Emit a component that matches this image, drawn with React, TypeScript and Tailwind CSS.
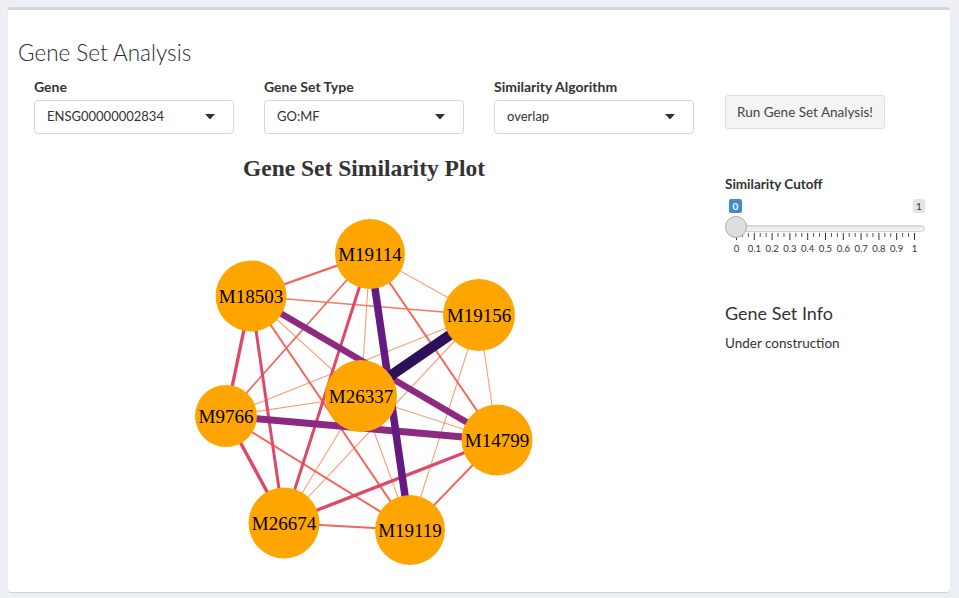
import React from "react";

type GeneNode = { id: string; x: number; y: number; r: number };

// node positions are in page pixels; the svg's viewBox starts where the svg sits
const nodes: GeneNode[] = [
  { id: "M19114", x: 370, y: 254, r: 35 },
  { id: "M18503", x: 251, y: 296, r: 35.5 },
  { id: "M19156", x: 479, y: 315, r: 36 },
  { id: "M26337", x: 361, y: 396, r: 36 },
  { id: "M9766", x: 226, y: 416, r: 31 },
  { id: "M14799", x: 497, y: 440, r: 35.5 },
  { id: "M26674", x: 284, y: 523, r: 35.5 },
  { id: "M19119", x: 410, y: 530, r: 35 },
];

const LIGHT = { c: "#fb9f75", w: 1.1 };
const SALMON = { c: "#f1665e", w: 2 };
const RED = { c: "#de4968", w: 3.4 };

const edges: [string, string, string, number][] = [
  ["M19114", "M19156", LIGHT.c, LIGHT.w],
  ["M19114", "M26337", LIGHT.c, LIGHT.w],
  ["M18503", "M26337", LIGHT.c, LIGHT.w],
  ["M19156", "M9766", LIGHT.c, LIGHT.w],
  ["M19156", "M14799", LIGHT.c, LIGHT.w],
  ["M19156", "M26674", LIGHT.c, LIGHT.w],
  ["M19156", "M19119", LIGHT.c, LIGHT.w],
  ["M26337", "M9766", LIGHT.c, LIGHT.w],
  ["M26337", "M14799", LIGHT.c, LIGHT.w],
  ["M26337", "M26674", LIGHT.c, LIGHT.w],
  ["M26337", "M19119", LIGHT.c, LIGHT.w],
  ["M19114", "M18503", SALMON.c, 2.3],
  ["M19114", "M14799", SALMON.c, SALMON.w],
  ["M19114", "M9766", SALMON.c, 1.6],
  ["M18503", "M19156", "#f4795f", 1.5],
  ["M18503", "M19119", SALMON.c, SALMON.w],
  ["M9766", "M19119", SALMON.c, SALMON.w],
  ["M14799", "M19119", SALMON.c, SALMON.w],
  ["M26674", "M19119", SALMON.c, 1.8],
  ["M18503", "M9766", RED.c, RED.w],
  ["M18503", "M26674", RED.c, 3],
  ["M19114", "M26674", RED.c, 3],
  ["M9766", "M26674", RED.c, RED.w],
  ["M14799", "M26674", RED.c, RED.w],
  ["M18503", "M14799", "#8c2981", 6.5],
  ["M9766", "M14799", "#8c2981", 7],
  ["M19114", "M19119", "#641a80", 7.5],
  ["M19156", "M26337", "#2c105c", 10.5],
];

const byId = (id: string) => nodes.find((n) => n.id === id)!;

const SelectBox = ({ label, value }: { label: string; value: string }) => (
  <div className="w-[230px] px-[15px]">
    <div className="h-[20px] text-[14px] font-bold leading-[20px] text-[#333]">{label}</div>
    <div className="mt-[3px] flex h-[34px] w-[200px] items-center justify-between rounded-[4px] border border-[#d2d6de] bg-white pl-[12px] pr-[18px] text-[13px] text-[#333]">
      <span>{value}</span>
      <svg width="10" height="6" viewBox="0 0 10 6">
        <path d="M0 0 L10 0 L5 5.5 Z" fill="#333" />
      </svg>
    </div>
  </div>
);

// 10 big steps, 2 small ticks in each
const ticks = Array.from({ length: 31 }, (_, i) => i);

const CutoffSlider = () => (
  <div className="relative mt-[2px] h-[62px] w-[200px]">
    <div className="absolute left-[4px] top-[3px] flex h-[14px] w-[13px] items-center justify-center rounded-[2px] bg-[#428bca] text-[10px] font-bold leading-none text-white">
      0
    </div>
    <div className="absolute left-[188px] top-[3px] flex h-[14px] w-[12px] items-center justify-center rounded-[2px] bg-[#e1e4e9] text-[10px] leading-none text-[#333]">
      1
    </div>
    <div className="absolute left-[11px] right-0 top-[29px] h-[7px] rounded-full border border-[#d4d4d4] bg-[#f0f0f0] shadow-[inset_0_1px_1px_rgba(0,0,0,0.08)]" />
    <svg className="absolute left-0 top-[37px]" width="200" height="9">
      {ticks.map((i) => {
        const x = 11.5 + (i * 178) / 30;
        const major = i % 3 === 0;
        return (
          <line
            key={i}
            x1={x}
            x2={x}
            y1={0}
            y2={major ? 7 : 4}
            stroke={major ? "#333" : "#555"}
            strokeWidth={1}
          />
        );
      })}
    </svg>
    <div className="absolute left-0 top-[20px] h-[22px] w-[22px] rounded-full border border-[#acacac] bg-[#dedede]" />
    <div className="absolute left-0 top-[48px] flex w-[200px]">
      {Array.from({ length: 11 }, (_, i) => (
        <span
          key={i}
          className="absolute -translate-x-1/2 text-[9.5px] leading-[10px] text-[#333]"
          style={{ left: 11.5 + i * 17.8 }}
        >
          {i === 0 ? "0" : i === 10 ? "1" : `0.${i}`}
        </span>
      ))}
    </div>
  </div>
);

const SimilarityPlot = () => (
  <div className="w-[690px] px-[15px]">
    <div className="mt-[3px] h-[30px] text-center font-['Liberation_Serif',serif] text-[23.5px] font-bold leading-[30px] text-[#333]">
      Gene Set Similarity Plot
    </div>
    <svg className="mt-[7px] block" width="660" height="395" viewBox="34 190 660 395">
      {edges.map(([a, b, c, w], i) => {
        const p = byId(a);
        const q = byId(b);
        return <line key={i} x1={p.x} y1={p.y} x2={q.x} y2={q.y} stroke={c} strokeWidth={w} />;
      })}
      {nodes.map((n) => (
        <g key={n.id}>
          <circle cx={n.x} cy={n.y} r={n.r} fill="#ffa500" />
          <text
            x={n.x}
            y={n.y + 6.5}
            textAnchor="middle"
            fontFamily="'Liberation Serif', serif"
            fontSize="19"
            fill="#000"
          >
            {n.id}
          </text>
        </g>
      ))}
    </svg>
  </div>
);

export default function App() {
  return (
    <div className="h-[598px] w-[959px] overflow-hidden bg-[#ecf0f5] pt-[7px] font-['Lato',sans-serif]">
      <div className="ml-[8px] h-[585px] w-[942px] rounded-[3px] border-t-[3px] border-[#d2d6de] bg-white px-[11px] shadow-[0_1px_1px_rgba(0,0,0,0.12)]">
        <h2 className="-ml-px mt-[29px] h-[28px] text-[22.5px] font-light leading-[28px] text-[#2a2a2a]">
          Gene Set Analysis
        </h2>
        <div className="mt-[10px] flex">
          <SelectBox label="Gene" value="ENSG00000002834" />
          <SelectBox label="Gene Set Type" value="GO:MF" />
          <SelectBox label="Similarity Algorithm" value="overlap" />
          <div className="w-[230px] pl-[16px] pr-[14px] pt-[18px]">
            <button className="h-[34px] rounded-[3px] border border-[#ddd] bg-[#f4f4f4] px-[11px] text-[13.5px] text-[#444]">
              Run Gene Set Analysis!
            </button>
          </div>
        </div>
        <div className="mt-[16px] flex">
          <SimilarityPlot />
          <div className="w-[230px] pl-[16px] pr-[14px] pt-[24px]">
            <div className="h-[20px] text-[13.5px] font-bold leading-[20px] text-[#333]">Similarity Cutoff</div>
            <CutoffSlider />
            <div className="mt-[43px] h-[24px] text-[18px] leading-[24px] text-[#333]">Gene Set Info</div>
            <div className="mt-[8px] text-[13.5px] leading-[20px] text-[#333]">Under construction</div>
          </div>
        </div>
      </div>
    </div>
  );
}
